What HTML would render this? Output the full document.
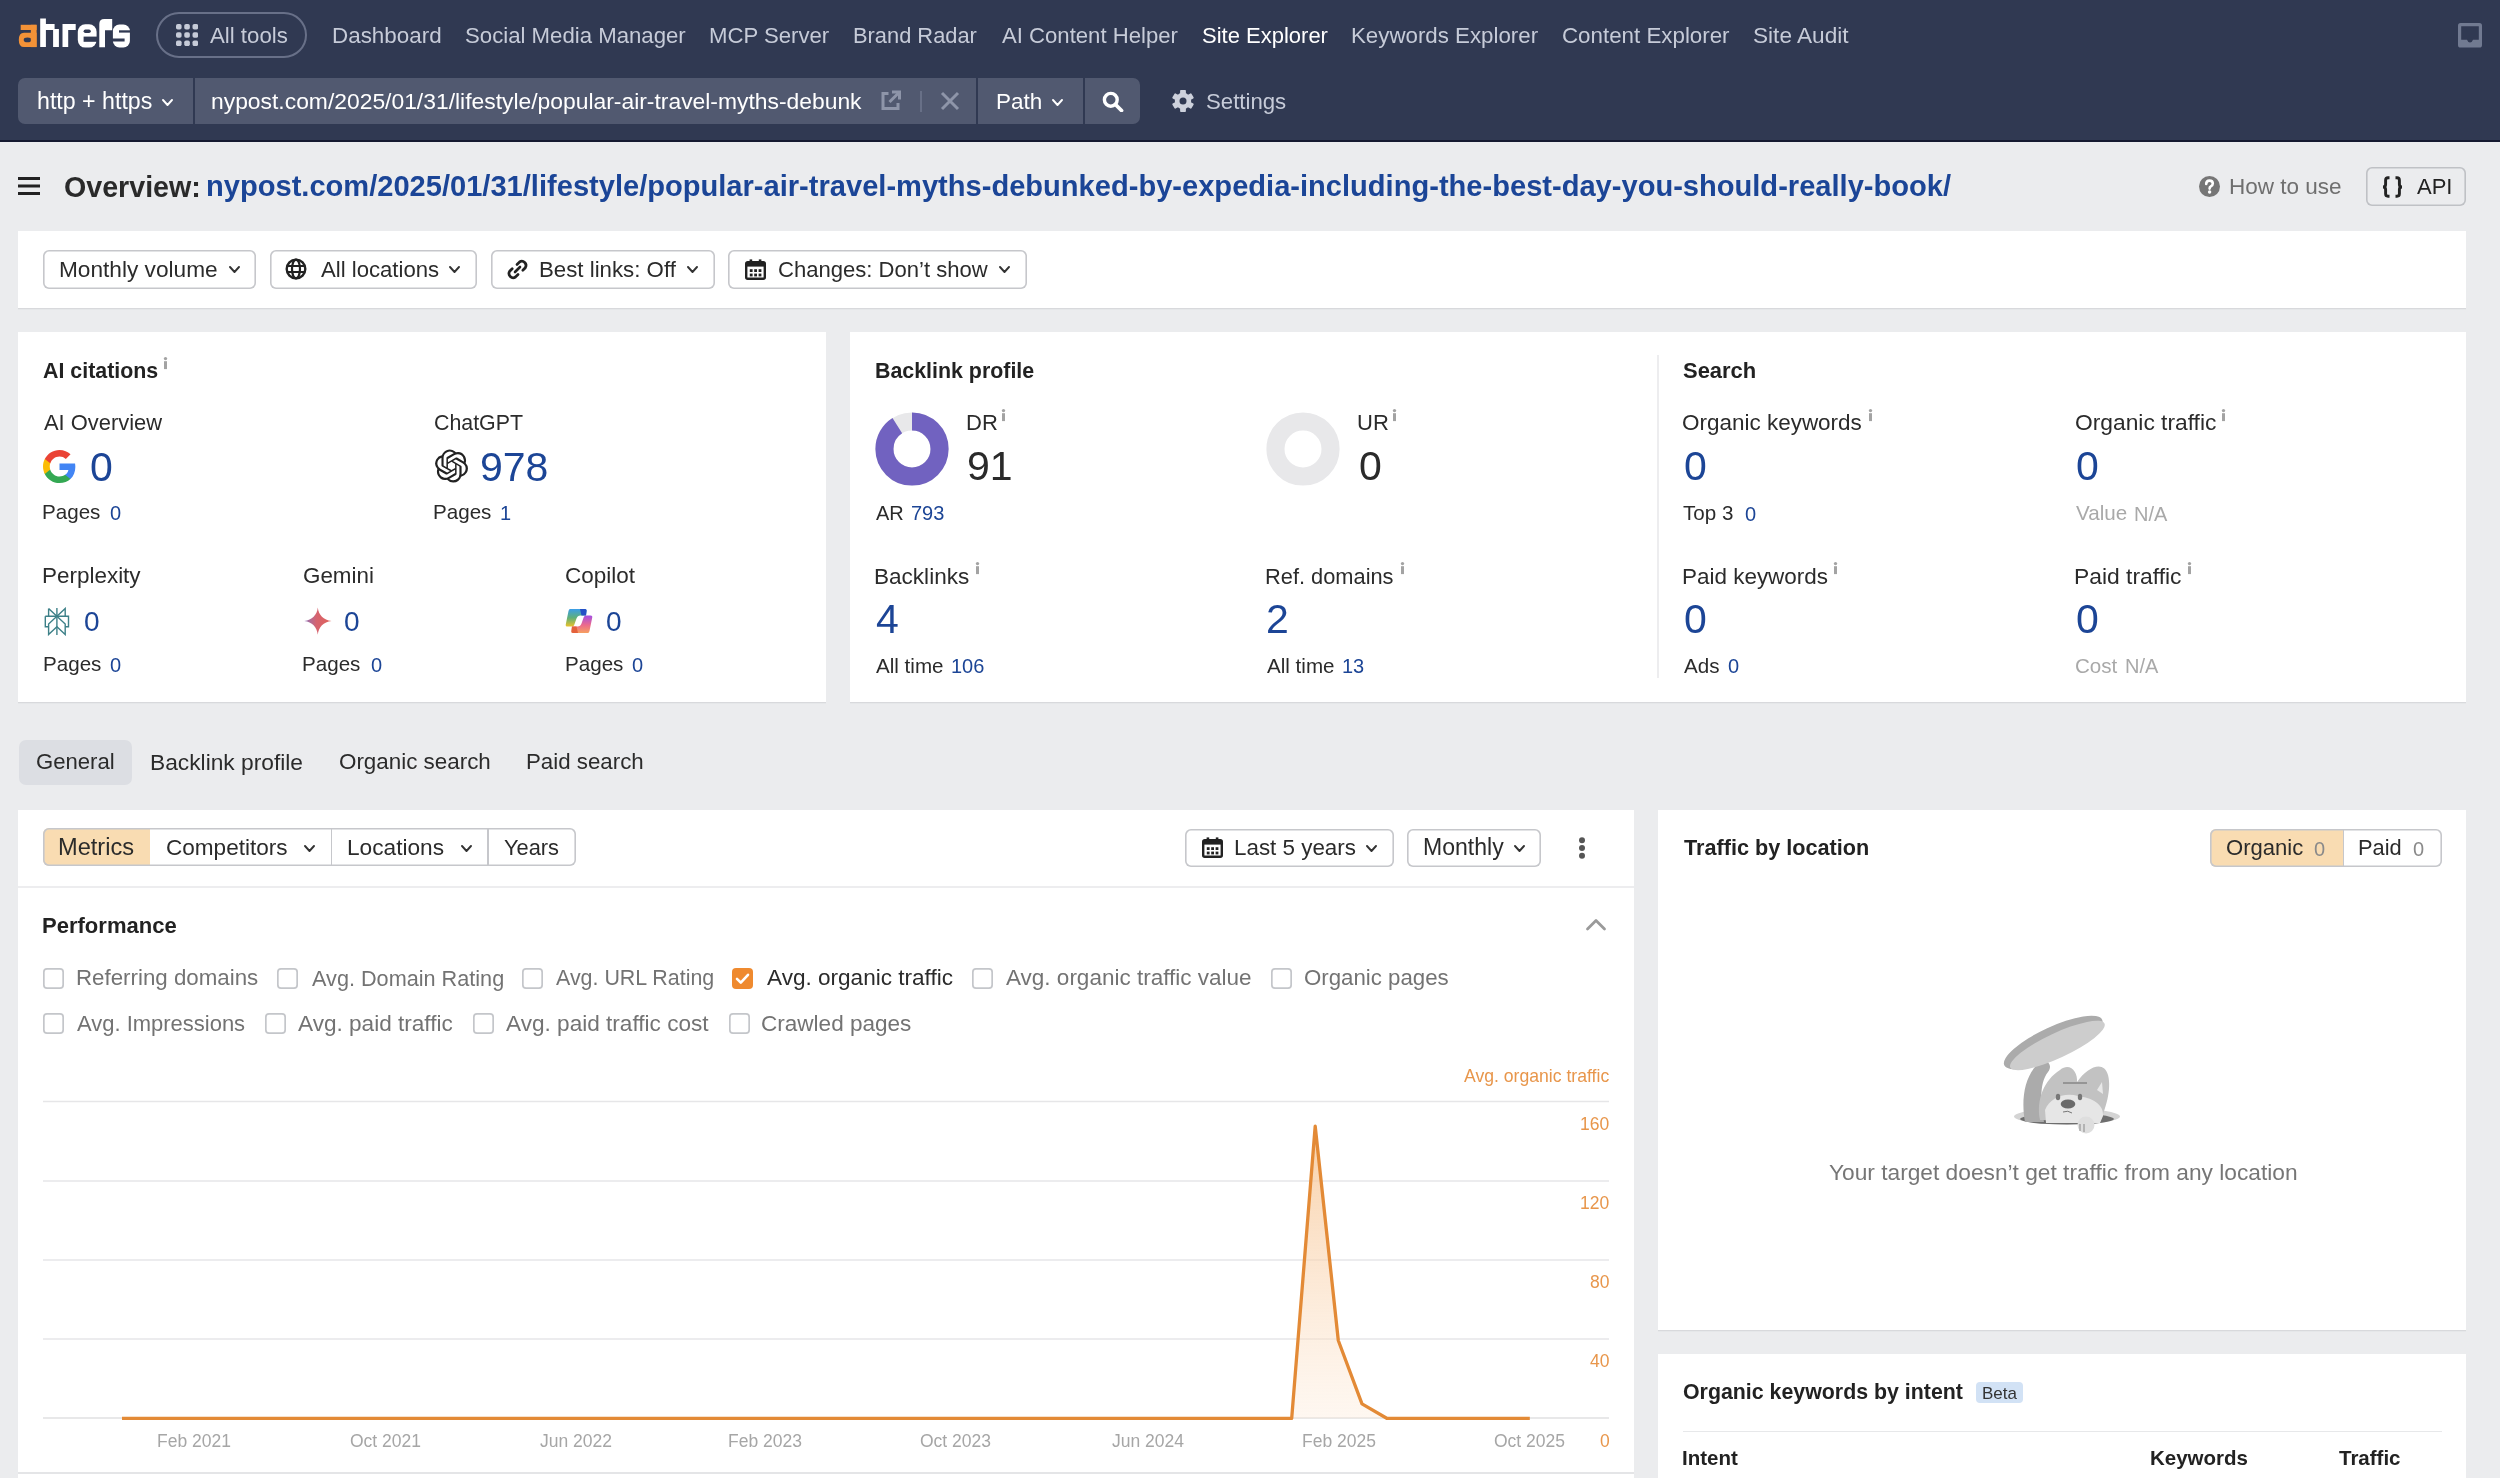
<!DOCTYPE html>
<html><head><meta charset="utf-8"><title>Ahrefs Site Explorer</title><style>
html,body{margin:0;padding:0;width:2500px;height:1478px;overflow:hidden;background:#ebecee;}
body{position:relative;font-family:"Liberation Sans",sans-serif;}
.t{position:absolute;white-space:nowrap;will-change:transform;}
.r{position:absolute;}
</style></head><body>
<div class="r" style="left:0px;top:0px;width:2500px;height:140px;background:#303952"></div>
<div class="r" style="left:0px;top:140px;width:2500px;height:2px;background:#151a30"></div>
<svg class="r" style="left:14px;top:14px;" width="120" height="38" viewBox="0 0 120 38"><g transform="translate(-14 -14)">
<rect x="20.7" y="24.8" width="15.9" height="5.2" fill="#f39237"/>
<rect x="30.8" y="24.8" width="5.8" height="22.3" fill="#f39237"/>
<path fill="#f39237" fill-rule="evenodd" d="M24 32.8 H36.6 V47.1 H24 Q18.8 47.1 18.8 40 Q18.8 32.8 24 32.8Z M27.5 37.6 Q31.3 37.6 31.3 39.9 Q31.3 42.2 27.5 42.2 Q23.7 42.2 23.7 39.9 Q23.7 37.6 27.5 37.6Z"/>
<path fill="#fff" d="M40.2 18.6 H45.9 V24.1 H54.6 V28.9 H58.9 V47.1 H53.1 V30.1 H45.9 V47.1 H40.2 Z"/>
<path fill="#fff" d="M62.5 24.1 H75.7 V30.1 H68.2 V47.1 H62.5 Z"/>
<rect x="77.8" y="24.3" width="18.8" height="23.3" rx="7.5" fill="#fff"/>
<rect x="83.6" y="29.4" width="7.2" height="3.6" rx="1.8" fill="#303952"/>
<rect x="83.6" y="36.6" width="14" height="5.2" fill="#303952"/>
<path fill="#fff" d="M99.3 47.3 V24 Q99.3 19 104.3 19 H112.2 V30.3 H105 V47.3 Z"/>
<rect x="112.9" y="24.5" width="17" height="23" rx="6.5" fill="#fff"/>
<rect x="119" y="30.3" width="12" height="2.3" fill="#303952"/>
<rect x="111" y="38.5" width="13.6" height="3" fill="#303952"/>
</g></svg>
<div class="r" style="left:156px;top:12px;width:151px;height:46px;border:2px solid #687088;border-radius:24px;box-sizing:border-box"></div>
<svg class="r" style="left:176px;top:24px;" width="22" height="22" viewBox="0 0 22 22"><rect x="0.00" y="0.00" width="5.6" height="5.6" rx="1.8" fill="#c6cbd8"/><rect x="8.25" y="0.00" width="5.6" height="5.6" rx="1.8" fill="#c6cbd8"/><rect x="16.50" y="0.00" width="5.6" height="5.6" rx="1.8" fill="#c6cbd8"/><rect x="0.00" y="8.25" width="5.6" height="5.6" rx="1.8" fill="#c6cbd8"/><rect x="8.25" y="8.25" width="5.6" height="5.6" rx="1.8" fill="#c6cbd8"/><rect x="16.50" y="8.25" width="5.6" height="5.6" rx="1.8" fill="#c6cbd8"/><rect x="0.00" y="16.50" width="5.6" height="5.6" rx="1.8" fill="#c6cbd8"/><rect x="8.25" y="16.50" width="5.6" height="5.6" rx="1.8" fill="#c6cbd8"/><rect x="16.50" y="16.50" width="5.6" height="5.6" rx="1.8" fill="#c6cbd8"/></svg>
<div class="t" style="top:24.89px;font-size:22.22px;line-height:22.22px;color:#c6cbd8;left:210.00px;">All tools</div>
<div class="t" style="top:24.79px;font-size:22.42px;line-height:22.42px;color:#c6cbd8;left:331.71px;">Dashboard</div>
<div class="t" style="top:24.90px;font-size:22.2px;line-height:22.2px;color:#c6cbd8;left:465.00px;">Social Media Manager</div>
<div class="t" style="top:24.92px;font-size:22.16px;line-height:22.16px;color:#c6cbd8;left:709.43px;">MCP Server</div>
<div class="t" style="top:25.07px;font-size:21.85px;line-height:21.85px;color:#c6cbd8;left:853.15px;">Brand Radar</div>
<div class="t" style="top:24.94px;font-size:22.13px;line-height:22.13px;color:#c6cbd8;left:1001.90px;">AI Content Helper</div>
<div class="t" style="top:24.99px;font-size:22.01px;line-height:22.01px;color:#ffffff;left:1201.61px;">Site Explorer</div>
<div class="t" style="top:24.84px;font-size:22.31px;line-height:22.31px;color:#c6cbd8;left:1350.72px;">Keywords Explorer</div>
<div class="t" style="top:24.83px;font-size:22.34px;line-height:22.34px;color:#c6cbd8;left:1561.68px;">Content Explorer</div>
<div class="t" style="top:24.69px;font-size:22.63px;line-height:22.63px;color:#c6cbd8;left:1753.18px;">Site Audit</div>
<svg class="r" style="left:2458px;top:23px;" width="24" height="25" viewBox="0 0 24 25"><rect x="0" y="0" width="24" height="24.5" rx="2.6" fill="#717a91"/><path d="M3.2 3.2 H20.8 V16.8 H15 Q14 19.6 12 19.6 Q10 19.6 9 16.8 H3.2Z" fill="#303952"/></svg>
<div class="r" style="left:18px;top:78px;width:1122px;height:46px;background:#515970;border-radius:7px"></div>
<div class="r" style="left:193px;top:78px;width:2px;height:46px;background:#303952"></div>
<div class="r" style="left:976px;top:78px;width:2px;height:46px;background:#303952"></div>
<div class="r" style="left:1083px;top:78px;width:2px;height:46px;background:#303952"></div>
<div class="t" style="top:89.91px;font-size:23.18px;line-height:23.18px;color:#fff;left:37.49px;">http + https</div>
<svg class="r" style="left:161.5px;top:98.5px;" width="11" height="7" viewBox="0 0 11 7"><path d="M1 1 L5.5 6 L10 1" fill="none" stroke="#fff" stroke-width="1.9" stroke-linecap="round" stroke-linejoin="round"/></svg>
<div class="t" style="top:90.06px;font-size:22.87px;line-height:22.87px;color:#fff;left:211.01px;">nypost.com/2025/01/31/lifestyle/popular-air-travel-myths-debunk</div>
<svg class="r" style="left:880px;top:90px;" width="22" height="21" viewBox="0 0 22 21"><path d="M8.5 3.5 H3 V18.5 H18 V13" fill="none" stroke="#8e95a9" stroke-width="3"/><path d="M12 2 H19.5 V9.5" fill="none" stroke="#8e95a9" stroke-width="3"/><path d="M19 2.5 L9.5 12" stroke="#8e95a9" stroke-width="3"/></svg>
<div class="r" style="left:920px;top:91px;width:2px;height:21px;background:#687087"></div>
<svg class="r" style="left:940px;top:91px;" width="20" height="20" viewBox="0 0 20 20"><path d="M2 2 L18 18 M18 2 L2 18" stroke="#8e95a9" stroke-width="3"/></svg>
<div class="t" style="top:90.75px;font-size:22.51px;line-height:22.51px;color:#fff;left:996.40px;">Path</div>
<svg class="r" style="left:1052px;top:98.5px;" width="11" height="7" viewBox="0 0 11 7"><path d="M1 1 L5.5 6 L10 1" fill="none" stroke="#fff" stroke-width="1.9" stroke-linecap="round" stroke-linejoin="round"/></svg>
<svg class="r" style="left:1102px;top:91px;" width="22" height="21" viewBox="0 0 22 21"><circle cx="8.8" cy="8.8" r="6.4" fill="none" stroke="#fff" stroke-width="3.4"/><path d="M13.5 13.5 L19.5 19.5" stroke="#fff" stroke-width="3.8" stroke-linecap="round"/></svg>
<svg class="r" style="left:1171.6px;top:90px;" width="22" height="22" viewBox="0 0 22 22"><g transform="translate(11 11)" fill="#cdd1dc"><rect x="-2.9" y="-11" width="5.8" height="7" rx="0.8" transform="rotate(0)"/><rect x="-2.9" y="-11" width="5.8" height="7" rx="0.8" transform="rotate(60)"/><rect x="-2.9" y="-11" width="5.8" height="7" rx="0.8" transform="rotate(120)"/><rect x="-2.9" y="-11" width="5.8" height="7" rx="0.8" transform="rotate(180)"/><rect x="-2.9" y="-11" width="5.8" height="7" rx="0.8" transform="rotate(240)"/><rect x="-2.9" y="-11" width="5.8" height="7" rx="0.8" transform="rotate(300)"/><circle r="8.2"/></g><circle cx="11" cy="11" r="3.5" fill="#303952"/></svg>
<div class="t" style="top:90.89px;font-size:22.21px;line-height:22.21px;color:#c6cbd8;left:1205.50px;">Settings</div>
<svg class="r" style="left:18px;top:177px;" width="22" height="18" viewBox="0 0 22 18"><rect y="0" width="22" height="3" fill="#222"/><rect y="7.5" width="22" height="3" fill="#222"/><rect y="15" width="22" height="3" fill="#222"/></svg>
<div class="t" style="top:172.69px;font-size:28.63px;line-height:28.63px;color:#2a2a2a;font-weight:700;left:63.85px;">Overview:</div>
<div class="t" style="top:172.46px;font-size:29.08px;line-height:29.08px;color:#1b4597;font-weight:700;left:206.11px;">nypost.com/2025/01/31/lifestyle/popular-air-travel-myths-debunked-by-expedia-including-the-best-day-you-should-really-book/</div>
<svg class="r" style="left:2199px;top:176px;" width="21" height="21" viewBox="0 0 21 21"><circle cx="10.5" cy="10.5" r="10.5" fill="#767676"/><path d="M7.2 8 Q7.2 4.6 10.5 4.6 Q13.8 4.6 13.8 7.6 Q13.8 9.4 11.8 10.4 Q10.6 11 10.6 12.6" fill="none" stroke="#fff" stroke-width="2.6" stroke-linecap="round"/><circle cx="10.6" cy="16" r="1.7" fill="#fff"/></svg>
<div class="t" style="top:175.74px;font-size:22.52px;line-height:22.52px;color:#6f6f6f;left:2228.60px;">How to use</div>
<div class="r" style="left:2366px;top:167px;width:100px;height:39px;box-shadow:inset 0 0 0 1.6px #bfc1c5;border-radius:6px"></div>
<svg class="r" style="left:2381px;top:176px;" width="24" height="22" viewBox="0 0 24 22"><path d="M8.5 1.8 H7 Q4.6 1.8 4.6 4.2 V8.6 Q4.6 11 2 11 Q4.6 11 4.6 13.4 V17.8 Q4.6 20.2 7 20.2 H8.5" fill="none" stroke="#222" stroke-width="2.9"/><path d="M14.5 1.8 H16 Q18.4 1.8 18.4 4.2 V8.6 Q18.4 11 21 11 Q18.4 11 18.4 13.4 V17.8 Q18.4 20.2 16 20.2 H14.5" fill="none" stroke="#222" stroke-width="2.9"/></svg>
<div class="t" style="top:176.00px;font-size:22px;line-height:22px;color:#222;left:2417.00px;">API</div>
<div class="r" style="left:18px;top:231px;width:2448px;height:77px;background:#fff;box-shadow:0 1.3px 0 #d8d9dc"></div>
<div class="r" style="left:43px;top:250px;width:213px;height:39px;box-shadow:inset 0 0 0 1.6px #c6c7cb;border-radius:6px;background:#fff"></div>
<div class="t" style="top:258.17px;font-size:22.67px;line-height:22.67px;color:#2b2b2b;left:59.19px;">Monthly volume</div>
<svg class="r" style="left:228.5px;top:266px;" width="11" height="7" viewBox="0 0 11 7"><path d="M1 1 L5.5 6 L10 1" fill="none" stroke="#333" stroke-width="1.9" stroke-linecap="round" stroke-linejoin="round"/></svg>
<div class="r" style="left:269.5px;top:250px;width:207.0px;height:39px;box-shadow:inset 0 0 0 1.6px #c6c7cb;border-radius:6px;background:#fff"></div>
<svg class="r" style="left:285px;top:258px;" width="22" height="22" viewBox="0 0 22 22"><circle cx="11" cy="11" r="9.3" fill="none" stroke="#222" stroke-width="2.4"/><ellipse cx="11" cy="11" rx="4" ry="9.3" fill="none" stroke="#222" stroke-width="2.2"/><path d="M2 8 H20 M2 14 H20" stroke="#222" stroke-width="2.2"/></svg>
<div class="t" style="top:258.93px;font-size:22.15px;line-height:22.15px;color:#2b2b2b;left:320.60px;">All locations</div>
<svg class="r" style="left:448.5px;top:266px;" width="11" height="7" viewBox="0 0 11 7"><path d="M1 1 L5.5 6 L10 1" fill="none" stroke="#333" stroke-width="1.9" stroke-linecap="round" stroke-linejoin="round"/></svg>
<div class="r" style="left:490.5px;top:250px;width:224.0px;height:39px;box-shadow:inset 0 0 0 1.6px #c6c7cb;border-radius:6px;background:#fff"></div>
<svg class="r" style="left:506px;top:258px;" width="23" height="23" viewBox="0 0 23 23"><path d="M9 14 L14 9" stroke="#222" stroke-width="2.6" stroke-linecap="round"/><path d="M11 6.5 L13.5 4 a4.2 4.2 0 0 1 5.8 5.8 L16.8 12.3" fill="none" stroke="#222" stroke-width="2.7" stroke-linecap="round"/><path d="M12 16.5 L9.5 19 a4.2 4.2 0 0 1 -5.8 -5.8 L6.2 10.7" fill="none" stroke="#222" stroke-width="2.7" stroke-linecap="round"/></svg>
<div class="t" style="top:258.87px;font-size:22.26px;line-height:22.26px;color:#2b2b2b;left:539.02px;">Best links: Off</div>
<svg class="r" style="left:687px;top:266px;" width="11" height="7" viewBox="0 0 11 7"><path d="M1 1 L5.5 6 L10 1" fill="none" stroke="#333" stroke-width="1.9" stroke-linecap="round" stroke-linejoin="round"/></svg>
<div class="r" style="left:728px;top:250px;width:299px;height:39px;box-shadow:inset 0 0 0 1.6px #c6c7cb;border-radius:6px;background:#fff"></div>
<svg class="r" style="left:744.8px;top:258.5px;" width="21" height="21" viewBox="0 0 21 21"><rect x="1.2" y="3.2" width="18.6" height="16.6" rx="1.5" fill="none" stroke="#222" stroke-width="2.4"/><rect x="1.2" y="3.2" width="18.6" height="4.4" fill="#222"/><rect x="4.6" y="0.4" width="2.6" height="4" fill="#222"/><rect x="13.8" y="0.4" width="2.6" height="4" fill="#222"/><rect x="4.8" y="10.2" width="2.8" height="2.8" fill="#222"/><rect x="9.2" y="10.2" width="2.8" height="2.8" fill="#222"/><rect x="13.6" y="10.2" width="2.8" height="2.8" fill="#222"/><rect x="4.8" y="14.6" width="2.8" height="2.8" fill="#222"/><rect x="9.2" y="14.6" width="2.8" height="2.8" fill="#222"/><rect x="13.6" y="14.6" width="2.8" height="2.8" fill="#222"/></svg>
<div class="t" style="top:258.96px;font-size:22.07px;line-height:22.07px;color:#2b2b2b;left:778.10px;">Changes: Don’t show</div>
<svg class="r" style="left:999px;top:266px;" width="11" height="7" viewBox="0 0 11 7"><path d="M1 1 L5.5 6 L10 1" fill="none" stroke="#333" stroke-width="1.9" stroke-linecap="round" stroke-linejoin="round"/></svg>
<div class="r" style="left:18px;top:332px;width:808px;height:370px;background:#fff;box-shadow:0 1.3px 0 #d8d9dc"></div>
<div class="t" style="top:360.81px;font-size:21.39px;line-height:21.39px;color:#222;font-weight:700;left:43.27px;">AI citations</div>
<svg class="r" style="left:162.8px;top:356px;" width="5" height="14" viewBox="0 0 5 14"><circle cx="2.5" cy="2.6" r="1.65" fill="#a3a3a3"/><rect x="1" y="5.2" width="3" height="7.9" fill="#a3a3a3"/></svg>
<div class="t" style="top:412.05px;font-size:21.91px;line-height:21.91px;color:#2b2b2b;left:43.80px;">AI Overview</div>
<svg class="r" style="left:43px;top:450px;" width="33" height="33" viewBox="0 0 33 33"><g transform="translate(-1.5 -1.5) scale(1.5)"><path d="M22.56 12.25c0-.78-.07-1.53-.2-2.25H12v4.26h5.92c-.26 1.37-1.04 2.53-2.21 3.31v2.77h3.57c2.08-1.92 3.28-4.74 3.28-8.09z" fill="#4285F4"/><path d="M12 23c2.97 0 5.46-.98 7.28-2.66l-3.57-2.77c-.98.66-2.23 1.06-3.71 1.06-2.86 0-5.29-1.93-6.16-4.53H2.18v2.84C3.99 20.53 7.7 23 12 23z" fill="#34A853"/><path d="M5.84 14.09c-.22-.66-.35-1.36-.35-2.09s.13-1.43.35-2.09V7.07H2.18C1.43 8.55 1 10.22 1 12s.43 3.45 1.18 4.93l2.85-2.22.81-.62z" fill="#FBBC05"/><path d="M12 5.38c1.62 0 3.06.56 4.21 1.64l3.15-3.15C17.45 2.09 14.97 1 12 1 7.7 1 3.99 3.47 2.18 7.07l3.66 2.84c.87-2.6 3.3-4.53 6.16-4.53z" fill="#EA4335"/></g></svg>
<div class="t" style="top:446.50px;font-size:41px;line-height:41px;color:#1c4596;left:89.77px;">0</div>
<div class="t" style="top:502.20px;font-size:20.6px;line-height:20.6px;color:#2b2b2b;left:42.15px;">Pages</div>
<div class="t" style="top:503.00px;font-size:20px;line-height:20px;color:#1c4596;left:109.50px;">0</div>
<div class="t" style="top:412.81px;font-size:21.37px;line-height:21.37px;color:#2b2b2b;left:433.93px;">ChatGPT</div>
<svg class="r" style="left:434.5px;top:449px;" width="33" height="34" viewBox="0 0 24 24"><path fill="#222" d="M22.2819 9.8211a5.9847 5.9847 0 0 0-.5157-4.9108 6.0462 6.0462 0 0 0-6.5098-2.9A6.0651 6.0651 0 0 0 4.9807 4.1818a5.9847 5.9847 0 0 0-3.9977 2.9 6.0462 6.0462 0 0 0 .7427 7.0966 5.98 5.98 0 0 0 .511 4.9107 6.051 6.051 0 0 0 6.5146 2.9001A5.9847 5.9847 0 0 0 13.2599 24a6.0557 6.0557 0 0 0 5.7718-4.2058 5.9894 5.9894 0 0 0 3.9977-2.9001 6.0557 6.0557 0 0 0-.7475-7.0729zm-9.022 12.6081a4.4755 4.4755 0 0 1-2.8764-1.0408l.1419-.0804 4.7783-2.7582a.7948.7948 0 0 0 .3927-.6813v-6.7369l2.02 1.1686a.071.071 0 0 1 .038.052v5.5826a4.504 4.504 0 0 1-4.4945 4.4944zm-9.6607-4.1254a4.4708 4.4708 0 0 1-.5346-3.0137l.142.0852 4.783 2.7582a.7712.7712 0 0 0 .7806 0l5.8428-3.3685v2.3324a.0804.0804 0 0 1-.0332.0615L9.74 19.9502a4.4992 4.4992 0 0 1-6.1408-1.6464zM2.3408 7.8956a4.485 4.485 0 0 1 2.3655-1.9728V11.6a.7664.7664 0 0 0 .3879.6765l5.8144 3.3543-2.0201 1.1685a.0757.0757 0 0 1-.071 0l-4.8303-2.7865A4.504 4.504 0 0 1 2.3408 7.872zm16.5963 3.8558L13.1038 8.364 15.1192 7.2a.0757.0757 0 0 1 .071 0l4.8303 2.7913a4.4944 4.4944 0 0 1-.6765 8.1042v-5.6772a.79.79 0 0 0-.407-.667zm2.0107-3.0231l-.142-.0852-4.7735-2.7818a.7759.7759 0 0 0-.7854 0L9.409 9.2297V6.8974a.0662.0662 0 0 1 .0284-.0615l4.8303-2.7866a4.4992 4.4992 0 0 1 6.6802 4.66zM8.3065 12.863l-2.02-1.1638a.0804.0804 0 0 1-.038-.0567V6.0742a4.4992 4.4992 0 0 1 7.3757-3.4537l-.142.0805L8.704 5.459a.7948.7948 0 0 0-.3927.6813zm1.0976-2.3654l2.602-1.4998 2.6069 1.4998v2.9994l-2.5974 1.4997-2.6067-1.4997Z"/></svg>
<div class="t" style="top:446.50px;font-size:41px;line-height:41px;color:#1c4596;left:480.35px;">978</div>
<div class="t" style="top:502.20px;font-size:20.6px;line-height:20.6px;color:#2b2b2b;left:433.35px;">Pages</div>
<div class="t" style="top:503.00px;font-size:20px;line-height:20px;color:#1c4596;left:500.20px;">1</div>
<div class="t" style="top:564.77px;font-size:22.46px;line-height:22.46px;color:#2b2b2b;left:42.40px;">Perplexity</div>
<svg class="r" style="left:44px;top:607px;" width="26" height="29" viewBox="0 0 26 29"><g fill="none" stroke="#3d8088" stroke-width="1.4" stroke-linejoin="miter"><path d="M12.9 1 V28"/><path d="M4.6 1.5 L12.9 9.2 L21.2 1.5 V9.2 M4.6 1.5 V9.2"/><path d="M1.3 9.2 H24.5 V19.8 H21.2 M1.3 9.2 V19.8 H4.6"/><path d="M12.9 9.2 L4.6 17 V27.5 L12.9 19.8 L21.2 27.5 V17 L12.9 9.2"/></g></svg>
<div class="t" style="top:608.00px;font-size:28px;line-height:28px;color:#1c4596;left:83.62px;">0</div>
<div class="t" style="top:654.20px;font-size:20.6px;line-height:20.6px;color:#2b2b2b;left:42.55px;">Pages</div>
<div class="t" style="top:655.00px;font-size:20px;line-height:20px;color:#1c4596;left:109.70px;">0</div>
<div class="t" style="top:564.80px;font-size:22.39px;line-height:22.39px;color:#2b2b2b;left:302.88px;">Gemini</div>
<svg class="r" style="left:303.5px;top:607px;" width="28" height="28" viewBox="0 0 28 28"><defs><linearGradient id="gm" x1="0" y1="0.5" x2="1" y2="0.5"><stop offset="0" stop-color="#8f73b8"/><stop offset="0.45" stop-color="#d6636f"/><stop offset="1" stop-color="#e0625a"/></linearGradient></defs><path d="M13.8 0.5 C14.6 8 19.5 13 27.5 14 C19.5 15 14.6 20 13.8 27.8 C13 20 8 15 0.3 14 C8 13 13 8 13.8 0.5z" fill="url(#gm)"/></svg>
<div class="t" style="top:608.00px;font-size:28px;line-height:28px;color:#1c4596;left:344.22px;">0</div>
<div class="t" style="top:654.20px;font-size:20.6px;line-height:20.6px;color:#2b2b2b;left:302.35px;">Pages</div>
<div class="t" style="top:655.00px;font-size:20px;line-height:20px;color:#1c4596;left:370.60px;">0</div>
<div class="t" style="top:564.76px;font-size:22.48px;line-height:22.48px;color:#2b2b2b;left:565.08px;">Copilot</div>
<svg class="r" style="left:565px;top:608px;" width="28" height="26" viewBox="0 0 28 26"><defs>
<linearGradient id="cpa" x1="0" y1="0" x2="0" y2="1"><stop offset="0" stop-color="#3b9de8"/><stop offset="0.5" stop-color="#5fb07a"/><stop offset="1" stop-color="#eac22a"/></linearGradient>
<linearGradient id="cpb" x1="0" y1="0" x2="0" y2="1"><stop offset="0" stop-color="#a44ee2"/><stop offset="0.55" stop-color="#ec6b8c"/><stop offset="1" stop-color="#f6a060"/></linearGradient></defs>
<path d="M5 1 H20 Q22 1 21.5 3.5 L21 7.5 H15.5 Q12.5 7.5 11.5 10.5 L9.2 17 Q8.6 18.5 7 18.5 H2.5 Q0.3 18.5 0.8 16.2 L3.5 3 Q4 1 5 1Z" fill="url(#cpa)"/>
<path d="M15 1 H20 Q22 1 21.5 3.5 L21 7.5 H16.5 Z" fill="#2451c6"/>
<path d="M23 25 H8 Q6 25 6.5 22.5 L7 18.5 H12.5 Q15.5 18.5 16.5 15.5 L18.8 9 Q19.4 7.5 21 7.5 H25.5 Q27.7 7.5 27.2 9.8 L24.5 23 Q24 25 23 25Z" fill="url(#cpb)"/>
<path d="M13 25 H8 Q6 25 6.5 22.5 L7 18.5 H11.5 Z" fill="#e4613c"/></svg>
<div class="t" style="top:608.00px;font-size:28px;line-height:28px;color:#1c4596;left:605.82px;">0</div>
<div class="t" style="top:654.20px;font-size:20.6px;line-height:20.6px;color:#2b2b2b;left:564.55px;">Pages</div>
<div class="t" style="top:655.00px;font-size:20px;line-height:20px;color:#1c4596;left:632.00px;">0</div>
<div class="r" style="left:850px;top:332px;width:1616px;height:370px;background:#fff;box-shadow:0 1.3px 0 #d8d9dc"></div>
<div class="t" style="top:360.81px;font-size:21.39px;line-height:21.39px;color:#222;font-weight:700;left:874.61px;">Backlink profile</div>
<svg class="r" style="left:874.7px;top:411.5px;" width="74" height="74" viewBox="0 0 74 74"><circle cx="37" cy="37" r="27.55" fill="none" stroke="#e8e8ea" stroke-width="18.1"/><circle cx="37" cy="37" r="27.55" fill="none" stroke="#7162c0" stroke-width="18.1" stroke-dasharray="157.35 173.10" transform="rotate(-90 37 37)"/></svg>
<div class="t" style="top:411.70px;font-size:22px;line-height:22px;color:#2b2b2b;left:966.44px;">DR</div>
<svg class="r" style="left:1001.3px;top:407.7px;" width="5" height="14" viewBox="0 0 5 14"><circle cx="2.5" cy="2.6" r="1.65" fill="#a3a3a3"/><rect x="1" y="5.2" width="3" height="7.9" fill="#a3a3a3"/></svg>
<div class="t" style="top:446.40px;font-size:41px;line-height:41px;color:#2a2a2a;left:967.15px;">91</div>
<div class="t" style="top:502.70px;font-size:20px;line-height:20px;color:#2b2b2b;left:876.00px;">AR</div>
<div class="t" style="top:502.70px;font-size:20px;line-height:20px;color:#1c4596;left:911.00px;">793</div>
<svg class="r" style="left:1266px;top:411.5px;" width="74" height="74" viewBox="0 0 74 74"><circle cx="37" cy="37" r="27.55" fill="none" stroke="#e8e8ea" stroke-width="18.1"/></svg>
<div class="t" style="top:411.70px;font-size:22px;line-height:22px;color:#2b2b2b;left:1357.35px;">UR</div>
<svg class="r" style="left:1392.1px;top:407.7px;" width="5" height="14" viewBox="0 0 5 14"><circle cx="2.5" cy="2.6" r="1.65" fill="#a3a3a3"/><rect x="1" y="5.2" width="3" height="7.9" fill="#a3a3a3"/></svg>
<div class="t" style="top:446.40px;font-size:41px;line-height:41px;color:#2a2a2a;left:1358.57px;">0</div>
<div class="t" style="top:565.52px;font-size:22.55px;line-height:22.55px;color:#2b2b2b;left:874.20px;">Backlinks</div>
<svg class="r" style="left:974.6999999999999px;top:561px;" width="5" height="14" viewBox="0 0 5 14"><circle cx="2.5" cy="2.6" r="1.65" fill="#a3a3a3"/><rect x="1" y="5.2" width="3" height="7.9" fill="#a3a3a3"/></svg>
<div class="t" style="top:598.50px;font-size:41px;line-height:41px;color:#1c4596;left:876.18px;">4</div>
<div class="t" style="top:655.50px;font-size:20.6px;line-height:20.6px;color:#2b2b2b;left:876.00px;">All time</div>
<div class="t" style="top:656.30px;font-size:20px;line-height:20px;color:#1c4596;left:951.10px;">106</div>
<div class="t" style="top:565.89px;font-size:21.82px;line-height:21.82px;color:#2b2b2b;left:1264.95px;">Ref. domains</div>
<svg class="r" style="left:1399.8px;top:561px;" width="5" height="14" viewBox="0 0 5 14"><circle cx="2.5" cy="2.6" r="1.65" fill="#a3a3a3"/><rect x="1" y="5.2" width="3" height="7.9" fill="#a3a3a3"/></svg>
<div class="t" style="top:598.50px;font-size:41px;line-height:41px;color:#1c4596;left:1266.35px;">2</div>
<div class="t" style="top:655.50px;font-size:20.6px;line-height:20.6px;color:#2b2b2b;left:1266.70px;">All time</div>
<div class="t" style="top:656.30px;font-size:20px;line-height:20px;color:#1c4596;left:1341.50px;">13</div>
<div class="r" style="left:1656.5px;top:355px;width:2.0px;height:323px;background:#ededef"></div>
<div class="t" style="top:360.03px;font-size:21.94px;line-height:21.94px;color:#222;font-weight:700;left:1682.95px;">Search</div>
<div class="t" style="top:411.96px;font-size:22.47px;line-height:22.47px;color:#2b2b2b;left:1682.49px;">Organic keywords</div>
<svg class="r" style="left:1868.3px;top:407.7px;" width="5" height="14" viewBox="0 0 5 14"><circle cx="2.5" cy="2.6" r="1.65" fill="#a3a3a3"/><rect x="1" y="5.2" width="3" height="7.9" fill="#a3a3a3"/></svg>
<div class="t" style="top:446.40px;font-size:41px;line-height:41px;color:#1c4596;left:1683.57px;">0</div>
<div class="t" style="top:502.70px;font-size:20.6px;line-height:20.6px;color:#2b2b2b;left:1683.09px;">Top 3</div>
<div class="t" style="top:503.50px;font-size:20px;line-height:20px;color:#1c4596;left:1745.00px;">0</div>
<div class="t" style="top:411.31px;font-size:22.79px;line-height:22.79px;color:#2b2b2b;left:2074.67px;">Organic traffic</div>
<svg class="r" style="left:2221.3px;top:407.7px;" width="5" height="14" viewBox="0 0 5 14"><circle cx="2.5" cy="2.6" r="1.65" fill="#a3a3a3"/><rect x="1" y="5.2" width="3" height="7.9" fill="#a3a3a3"/></svg>
<div class="t" style="top:446.40px;font-size:41px;line-height:41px;color:#1c4596;left:2075.57px;">0</div>
<div class="t" style="top:502.70px;font-size:20.6px;line-height:20.6px;color:#a9a9a9;left:2075.70px;">Value</div>
<div class="t" style="top:503.50px;font-size:20px;line-height:20px;color:#a9a9a9;left:2133.90px;">N/A</div>
<div class="t" style="top:565.57px;font-size:22.46px;line-height:22.46px;color:#2b2b2b;left:1681.70px;">Paid keywords</div>
<svg class="r" style="left:1833.0px;top:561px;" width="5" height="14" viewBox="0 0 5 14"><circle cx="2.5" cy="2.6" r="1.65" fill="#a3a3a3"/><rect x="1" y="5.2" width="3" height="7.9" fill="#a3a3a3"/></svg>
<div class="t" style="top:598.50px;font-size:41px;line-height:41px;color:#1c4596;left:1683.57px;">0</div>
<div class="t" style="top:655.50px;font-size:20.6px;line-height:20.6px;color:#2b2b2b;left:1683.50px;">Ads</div>
<div class="t" style="top:656.30px;font-size:20px;line-height:20px;color:#1c4596;left:1728.20px;">0</div>
<div class="t" style="top:564.88px;font-size:22.85px;line-height:22.85px;color:#2b2b2b;left:2073.87px;">Paid traffic</div>
<svg class="r" style="left:2187.2000000000003px;top:561px;" width="5" height="14" viewBox="0 0 5 14"><circle cx="2.5" cy="2.6" r="1.65" fill="#a3a3a3"/><rect x="1" y="5.2" width="3" height="7.9" fill="#a3a3a3"/></svg>
<div class="t" style="top:598.50px;font-size:41px;line-height:41px;color:#1c4596;left:2075.57px;">0</div>
<div class="t" style="top:655.50px;font-size:20.6px;line-height:20.6px;color:#a9a9a9;left:2074.67px;">Cost</div>
<div class="t" style="top:656.30px;font-size:20px;line-height:20px;color:#a9a9a9;left:2125.40px;">N/A</div>
<div class="r" style="left:18.5px;top:739.5px;width:113.0px;height:45.0px;background:#dcdee3;border-radius:7px"></div>
<div class="t" style="top:751.44px;font-size:22.12px;line-height:22.12px;color:#2b2b2b;left:36.19px;">General</div>
<div class="t" style="top:750.62px;font-size:22.76px;line-height:22.76px;color:#2b2b2b;left:149.88px;">Backlink profile</div>
<div class="t" style="top:751.30px;font-size:22.4px;line-height:22.4px;color:#2b2b2b;left:339.19px;">Organic search</div>
<div class="t" style="top:751.35px;font-size:22.3px;line-height:22.3px;color:#2b2b2b;left:526.22px;">Paid search</div>
<div class="r" style="left:18px;top:810px;width:1616px;height:668px;background:#fff"></div>
<div class="r" style="left:18px;top:1472px;width:1616px;height:1.5px;background:#e4e5e7"></div>
<div class="r" style="left:43.3px;top:828.3px;width:532.7px;height:38.200000000000045px;background:#fff;border-radius:6px"></div>
<div class="r" style="left:43.3px;top:828.3px;width:107.10000000000001px;height:38.200000000000045px;background:#f9dcb2;border-radius:6px 0 0 6px"></div>
<div class="r" style="left:330.6px;top:828.3px;width:1.599999999999966px;height:38.200000000000045px;background:#c6c7cb"></div>
<div class="r" style="left:487.1px;top:828.3px;width:1.599999999999966px;height:38.200000000000045px;background:#c6c7cb"></div>
<div class="r" style="left:43.3px;top:828.3px;width:532.7px;height:38.200000000000045px;box-shadow:inset 0 0 0 1.6px #c6c7cb;border-radius:6px"></div>
<div class="t" style="top:835.50px;font-size:23.61px;line-height:23.61px;color:#2b2b2b;left:58.31px;">Metrics</div>
<div class="t" style="top:836.52px;font-size:22.56px;line-height:22.56px;color:#2b2b2b;left:166.17px;">Competitors</div>
<svg class="r" style="left:303.8px;top:844.5px;" width="11" height="7" viewBox="0 0 11 7"><path d="M1 1 L5.5 6 L10 1" fill="none" stroke="#333" stroke-width="1.9" stroke-linecap="round" stroke-linejoin="round"/></svg>
<div class="t" style="top:835.96px;font-size:22.67px;line-height:22.67px;color:#2b2b2b;left:346.69px;">Locations</div>
<svg class="r" style="left:461px;top:844.5px;" width="11" height="7" viewBox="0 0 11 7"><path d="M1 1 L5.5 6 L10 1" fill="none" stroke="#333" stroke-width="1.9" stroke-linecap="round" stroke-linejoin="round"/></svg>
<div class="t" style="top:836.88px;font-size:21.83px;line-height:21.83px;color:#2b2b2b;left:504.36px;">Years</div>
<div class="r" style="left:1185.4px;top:828.5px;width:208.19999999999982px;height:38.10000000000002px;box-shadow:inset 0 0 0 1.6px #c6c7cb;border-radius:6px;background:#fff"></div>
<svg class="r" style="left:1202px;top:837px;" width="21" height="21" viewBox="0 0 21 21"><rect x="1.2" y="3.2" width="18.6" height="16.6" rx="1.5" fill="none" stroke="#222" stroke-width="2.4"/><rect x="1.2" y="3.2" width="18.6" height="4.4" fill="#222"/><rect x="4.6" y="0.4" width="2.6" height="4" fill="#222"/><rect x="13.8" y="0.4" width="2.6" height="4" fill="#222"/><rect x="4.8" y="10.2" width="2.8" height="2.8" fill="#222"/><rect x="9.2" y="10.2" width="2.8" height="2.8" fill="#222"/><rect x="13.6" y="10.2" width="2.8" height="2.8" fill="#222"/><rect x="4.8" y="14.6" width="2.8" height="2.8" fill="#222"/><rect x="9.2" y="14.6" width="2.8" height="2.8" fill="#222"/><rect x="13.6" y="14.6" width="2.8" height="2.8" fill="#222"/></svg>
<div class="t" style="top:836.60px;font-size:22.4px;line-height:22.4px;color:#2b2b2b;left:1234.41px;">Last 5 years</div>
<svg class="r" style="left:1366px;top:844.5px;" width="11" height="7" viewBox="0 0 11 7"><path d="M1 1 L5.5 6 L10 1" fill="none" stroke="#333" stroke-width="1.9" stroke-linecap="round" stroke-linejoin="round"/></svg>
<div class="r" style="left:1407.4px;top:828.5px;width:133.79999999999995px;height:38.10000000000002px;box-shadow:inset 0 0 0 1.6px #c6c7cb;border-radius:6px;background:#fff"></div>
<div class="t" style="top:835.78px;font-size:23.04px;line-height:23.04px;color:#2b2b2b;left:1422.56px;">Monthly</div>
<svg class="r" style="left:1514px;top:844.5px;" width="11" height="7" viewBox="0 0 11 7"><path d="M1 1 L5.5 6 L10 1" fill="none" stroke="#333" stroke-width="1.9" stroke-linecap="round" stroke-linejoin="round"/></svg>
<svg class="r" style="left:1577px;top:837px;" width="10" height="22" viewBox="0 0 10 22"><circle cx="5" cy="3.2" r="3" fill="#555"/><circle cx="5" cy="11" r="3" fill="#555"/><circle cx="5" cy="18.8" r="3" fill="#555"/></svg>
<div class="r" style="left:18px;top:885.5px;width:1616px;height:2.0px;background:#ededef"></div>
<div class="t" style="top:914.98px;font-size:22.04px;line-height:22.04px;color:#222;font-weight:700;left:42.27px;">Performance</div>
<svg class="r" style="left:1585px;top:916px;" width="22" height="16" viewBox="0 0 22 16"><path d="M2.5 13 L11 4.5 L19.5 13" fill="none" stroke="#9a9a9a" stroke-width="2.8" stroke-linecap="round" stroke-linejoin="round"/></svg>
<div class="r" style="left:43px;top:967.5px;width:21px;height:21.0px;box-shadow:inset 0 0 0 1.7px #c4c6ca;border-radius:4px;background:#fff"></div>
<div class="t" style="top:967.35px;font-size:22.31px;line-height:22.31px;color:#737373;left:75.52px;">Referring domains</div>
<div class="r" style="left:277px;top:967.5px;width:21px;height:21.0px;box-shadow:inset 0 0 0 1.7px #c4c6ca;border-radius:4px;background:#fff"></div>
<div class="t" style="top:967.67px;font-size:21.66px;line-height:21.66px;color:#737373;left:311.50px;">Avg. Domain Rating</div>
<div class="r" style="left:522px;top:967.5px;width:21px;height:21.0px;box-shadow:inset 0 0 0 1.7px #c4c6ca;border-radius:4px;background:#fff"></div>
<div class="t" style="top:968.29px;font-size:21.42px;line-height:21.42px;color:#737373;left:556.00px;">Avg. URL Rating</div>
<svg class="r" style="left:732px;top:967.5px;" width="21" height="21" viewBox="0 0 21 21"><rect x="0" y="0" width="21" height="21" rx="4" fill="#ef8a2f"/><path d="M5 10.8 L8.8 14.6 L16 6.8" fill="none" stroke="#fff" stroke-width="2.6" stroke-linecap="round" stroke-linejoin="round"/></svg>
<div class="t" style="top:967.22px;font-size:22.57px;line-height:22.57px;color:#2b2b2b;left:767.00px;">Avg. organic traffic</div>
<div class="r" style="left:972px;top:967.5px;width:21px;height:21.0px;box-shadow:inset 0 0 0 1.7px #c4c6ca;border-radius:4px;background:#fff"></div>
<div class="t" style="top:967.25px;font-size:22.5px;line-height:22.5px;color:#737373;left:1006.30px;">Avg. organic traffic value</div>
<div class="r" style="left:1270.5px;top:967.5px;width:21.0px;height:21.0px;box-shadow:inset 0 0 0 1.7px #c4c6ca;border-radius:4px;background:#fff"></div>
<div class="t" style="top:967.37px;font-size:22.26px;line-height:22.26px;color:#737373;left:1303.70px;">Organic pages</div>
<div class="r" style="left:43px;top:1012.5px;width:21px;height:21.0px;box-shadow:inset 0 0 0 1.7px #c4c6ca;border-radius:4px;background:#fff"></div>
<div class="t" style="top:1012.81px;font-size:21.97px;line-height:21.97px;color:#737373;left:77.30px;">Avg. Impressions</div>
<div class="r" style="left:264.5px;top:1012.5px;width:21.0px;height:21.0px;box-shadow:inset 0 0 0 1.7px #c4c6ca;border-radius:4px;background:#fff"></div>
<div class="t" style="top:1012.51px;font-size:22.58px;line-height:22.58px;color:#737373;left:298.40px;">Avg. paid traffic</div>
<div class="r" style="left:472.5px;top:1012.5px;width:21.0px;height:21.0px;box-shadow:inset 0 0 0 1.7px #c4c6ca;border-radius:4px;background:#fff"></div>
<div class="t" style="top:1012.50px;font-size:22.6px;line-height:22.6px;color:#737373;left:506.40px;">Avg. paid traffic cost</div>
<div class="r" style="left:728.5px;top:1012.5px;width:21.0px;height:21.0px;box-shadow:inset 0 0 0 1.7px #c4c6ca;border-radius:4px;background:#fff"></div>
<div class="t" style="top:1012.52px;font-size:22.55px;line-height:22.55px;color:#737373;left:760.87px;">Crawled pages</div>
<div class="t" style="top:1067.69px;font-size:17.62px;line-height:17.62px;color:#e8964b;left:1464.00px;">Avg. organic traffic</div>
<svg class="r" style="left:0;top:0;pointer-events:none" width="2500" height="1478" viewBox="0 0 2500 1478"><line x1="43" y1="1101.5" x2="1609" y2="1101.5" stroke="#e6e6e8" stroke-width="1.6"/><line x1="43" y1="1181" x2="1609" y2="1181" stroke="#e6e6e8" stroke-width="1.6"/><line x1="43" y1="1260" x2="1609" y2="1260" stroke="#e6e6e8" stroke-width="1.6"/><line x1="43" y1="1339" x2="1609" y2="1339" stroke="#e6e6e8" stroke-width="1.6"/><line x1="43" y1="1418" x2="1609" y2="1418" stroke="#e0e0e2" stroke-width="1.6"/></svg>
<div class="t" style="top:1116.25px;font-size:17.5px;line-height:17.5px;color:#e8964b;left:1580.27px;">160</div>
<div class="t" style="top:1195.25px;font-size:17.5px;line-height:17.5px;color:#e8964b;left:1580.27px;">120</div>
<div class="t" style="top:1274.25px;font-size:17.5px;line-height:17.5px;color:#e8964b;left:1589.99px;">80</div>
<div class="t" style="top:1353.25px;font-size:17.5px;line-height:17.5px;color:#e8964b;left:1589.99px;">40</div>
<div class="t" style="top:1432.55px;font-size:17.5px;line-height:17.5px;color:#e8964b;left:1599.70px;">0</div>
<div class="t" style="top:1433.15px;font-size:17.5px;line-height:17.5px;color:#a6a6a6;left:157.22px;">Feb 2021</div>
<div class="t" style="top:1433.15px;font-size:17.5px;line-height:17.5px;color:#a6a6a6;left:349.72px;">Oct 2021</div>
<div class="t" style="top:1433.15px;font-size:17.5px;line-height:17.5px;color:#a6a6a6;left:539.96px;">Jun 2022</div>
<div class="t" style="top:1433.15px;font-size:17.5px;line-height:17.5px;color:#a6a6a6;left:728.43px;">Feb 2023</div>
<div class="t" style="top:1433.15px;font-size:17.5px;line-height:17.5px;color:#a6a6a6;left:919.98px;">Oct 2023</div>
<div class="t" style="top:1433.15px;font-size:17.5px;line-height:17.5px;color:#a6a6a6;left:1112.33px;">Jun 2024</div>
<div class="t" style="top:1433.15px;font-size:17.5px;line-height:17.5px;color:#a6a6a6;left:1301.58px;">Feb 2025</div>
<div class="t" style="top:1433.15px;font-size:17.5px;line-height:17.5px;color:#a6a6a6;left:1494.38px;">Oct 2025</div>
<svg class="r" style="left:0;top:0;pointer-events:none" width="2500" height="1478" viewBox="0 0 2500 1478"><defs><linearGradient id="ar" x1="0" y1="0" x2="0" y2="1"><stop offset="0" stop-color="#f6c08a" stop-opacity="0.75"/><stop offset="1" stop-color="#fde9d6" stop-opacity="0.35"/></linearGradient></defs><polygon points="1291.7,1418.3 1315.2,1126.2 1338.3,1340.5 1362,1403.9 1386.7,1418.3" fill="url(#ar)"/><polyline points="122,1418.3 1291.7,1418.3 1315.2,1126.2 1338.3,1340.5 1362,1403.9 1386.7,1418.3 1529.8,1418.3" fill="none" stroke="#e38a36" stroke-width="3.3" stroke-linejoin="round" stroke-linecap="butt"/></svg>
<div class="r" style="left:1658px;top:810px;width:808px;height:519.5px;background:#fff;box-shadow:0 1.3px 0 #d8d9dc"></div>
<div class="t" style="top:837.17px;font-size:21.65px;line-height:21.65px;color:#222;font-weight:700;left:1683.78px;">Traffic by location</div>
<div class="r" style="left:2210px;top:828.5px;width:231.5px;height:38.0px;background:#fff;border-radius:6px"></div>
<div class="r" style="left:2210px;top:828.5px;width:132.5px;height:38.0px;background:#f9dcb2;border-radius:6px 0 0 6px"></div>
<div class="r" style="left:2342.5px;top:828.5px;width:1.5px;height:38.0px;background:#c6c7cb"></div>
<div class="r" style="left:2210px;top:828.5px;width:231.5px;height:38.0px;box-shadow:inset 0 0 0 1.6px #c6c7cb;border-radius:6px"></div>
<div class="t" style="top:836.97px;font-size:22.07px;line-height:22.07px;color:#2b2b2b;left:2225.51px;">Organic</div>
<div class="t" style="top:838.50px;font-size:20px;line-height:20px;color:#8a8a8a;left:2314.30px;">0</div>
<div class="t" style="top:837.09px;font-size:21.83px;line-height:21.83px;color:#2b2b2b;left:2357.85px;">Paid</div>
<div class="t" style="top:838.50px;font-size:20px;line-height:20px;color:#8a8a8a;left:2412.60px;">0</div>
<svg class="r" style="left:0;top:0;pointer-events:none" width="2500" height="1478" viewBox="0 0 2500 1478">
<ellipse cx="2067" cy="1116.5" rx="53" ry="8" fill="#d4d4d4"/>
<ellipse cx="2067" cy="1119" rx="47" ry="5.5" fill="#6e6e6e"/>
<path d="M2025 1122 C2021 1100 2024 1075 2040 1062 C2048 1058 2053 1066 2048 1072 C2040 1082 2040 1100 2044 1122 Z" fill="#ababab"/>
<path d="M2040 1120 C2036 1100 2044 1080 2060 1070 C2070 1062 2078 1072 2077 1082 C2088 1066 2104 1060 2108 1075 C2112 1090 2105 1110 2100 1122 Z" fill="#c2c2c2"/>
<path d="M2045 1110 C2050 1098 2064 1092 2078 1096 C2092 1098 2104 1104 2103 1116 L2100 1123 H2046 Z" fill="#e6e6e6"/>
<ellipse cx="2058" cy="1097" rx="2.2" ry="3.2" fill="#777"/><ellipse cx="2080" cy="1097" rx="2.2" ry="3.2" fill="#777"/>
<ellipse cx="2068" cy="1104" rx="7.3" ry="4.5" fill="#6a6a6a"/>
<path d="M2063 1112 Q2068 1110 2072 1113" fill="none" stroke="#777" stroke-width="1"/>
<path d="M2063 1083 H2087" stroke="#777" stroke-width="1.2"/>
<path d="M2097 1090 L2102 1082 L2103 1094Z" fill="#e8e8e8"/>
<circle cx="2086" cy="1125" r="8.5" fill="#dedede"/>
<path d="M2080 1124 V1131 M2084 1124 V1132" stroke="#888" stroke-width="1"/>
<g transform="rotate(-25 2053 1042)">
<ellipse cx="2053" cy="1042.5" rx="54" ry="15.5" fill="#ababab"/>
<ellipse cx="2055.5" cy="1047" rx="52" ry="12.5" fill="#cdcdcd"/>
</g></svg>
<div class="t" style="top:1161.13px;font-size:22.73px;line-height:22.73px;color:#767676;left:1828.75px;">Your target doesn’t get traffic from any location</div>
<div class="r" style="left:1658px;top:1354px;width:808px;height:124px;background:#fff"></div>
<div class="t" style="top:1382.33px;font-size:21.35px;line-height:21.35px;color:#222;font-weight:700;left:1682.85px;">Organic keywords by intent</div>
<div class="r" style="left:1976px;top:1381.6px;width:47px;height:21.40000000000009px;background:#d2e2f5;border-radius:4px"></div>
<div class="t" style="top:1385.30px;font-size:17px;line-height:17px;color:#333;left:1981.64px;">Beta</div>
<div class="r" style="left:1683px;top:1430.5px;width:758.5px;height:1.5px;background:#e7e8ea"></div>
<div class="t" style="top:1447.65px;font-size:20.5px;line-height:20.5px;color:#222;font-weight:700;left:1682.37px;">Intent</div>
<div class="t" style="top:1447.65px;font-size:20.5px;line-height:20.5px;color:#222;font-weight:700;left:2150.17px;">Keywords</div>
<div class="t" style="top:1447.65px;font-size:20.5px;line-height:20.5px;color:#222;font-weight:700;left:2338.80px;">Traffic</div>
</body></html>
